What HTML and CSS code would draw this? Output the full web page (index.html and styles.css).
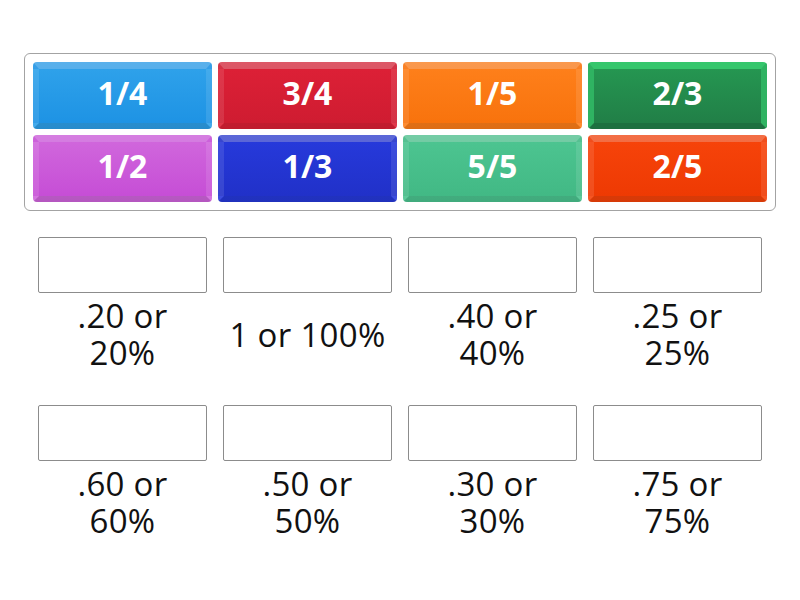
FILE: index.html
```html
<!DOCTYPE html>
<html>
<head>
<meta charset="utf-8">
<link rel="stylesheet" href="styles.css">
</head>
<body>
<div class="page">
  <div class="bank">
    <div class="tile blue">1/4</div>
    <div class="tile red">3/4</div>
    <div class="tile orange">1/5</div>
    <div class="tile green">2/3</div>
    <div class="tile purple">1/2</div>
    <div class="tile navy">1/3</div>
    <div class="tile teal">5/5</div>
    <div class="tile vermilion">2/5</div>
  </div>
  <div class="targets">
    <div class="cell"><div class="slot"></div><div class="label">.20 or<br>20%</div></div>
    <div class="cell"><div class="slot"></div><div class="label">1 or 100%</div></div>
    <div class="cell"><div class="slot"></div><div class="label">.40 or<br>40%</div></div>
    <div class="cell"><div class="slot"></div><div class="label">.25 or<br>25%</div></div>
    <div class="cell"><div class="slot"></div><div class="label">.60 or<br>60%</div></div>
    <div class="cell"><div class="slot"></div><div class="label">.50 or<br>50%</div></div>
    <div class="cell"><div class="slot"></div><div class="label">.30 or<br>30%</div></div>
    <div class="cell"><div class="slot"></div><div class="label">.75 or<br>75%</div></div>
  </div>
</div>
</body>
</html>
```
FILE: styles.css
```css
html, body {
  margin: 0;
  padding: 0;
  background: #ffffff;
}
body {
  font-family: "Open Sans", "Noto Sans", sans-serif;
  width: 800px;
  height: 600px;
  overflow: hidden;
}
.page {
  padding-top: 53px;
  display: flex;
  flex-direction: column;
  align-items: center;
}
.bank {
  width: 734px;
  border: 1px solid #a3a3a3;
  border-radius: 6px;
  padding: 8px;
  display: grid;
  grid-template-columns: repeat(4, 179px);
  grid-auto-rows: 67px;
  gap: 6px;
}
.tile {
  box-sizing: border-box;
  border-radius: 4px;
  border-style: solid;
  border-width: 7px 6px 6px 6px;
  border-top-color: rgba(255, 255, 255, 0.26);
  border-left-color: rgba(255, 255, 255, 0.1);
  border-right-color: rgba(255, 255, 255, 0.1);
  border-bottom-color: rgba(0, 0, 0, 0.12);
  color: #ffffff;
  font-weight: 700;
  font-size: 32px;
  display: flex;
  align-items: center;
  justify-content: center;
  line-height: 1;
  padding-bottom: 6px;
}
.blue { background: linear-gradient(#2ea1ea, #1e93e4); }
.red { background: linear-gradient(#dc2036, #cf1c31); }
.orange { background: linear-gradient(#fe7f1a, #f8730d); }
.green { background: linear-gradient(#259651, #217f47); }
.green { border-top-color: #35c66c; border-left-color: #2fb362; border-right-color: #2fb362; border-bottom-color: #1d7040; }
.purple { background: linear-gradient(#d066dc, #c64ed6); }
.navy { background: linear-gradient(#2639da, #2131c9); }
.teal { background: linear-gradient(#4cc490, #42b985); }
.vermilion { background: linear-gradient(#f6430a, #ee3a03); }
.targets {
  margin-top: 26px;
  display: grid;
  grid-template-columns: repeat(4, 169px);
  column-gap: 16px;
  row-gap: 26px;
}
.cell {
  display: flex;
  flex-direction: column;
}
.slot {
  box-sizing: border-box;
  height: 56px;
  border: 1px solid #8c8c8c;
  border-radius: 2px;
}
.label {
  height: 86px;
  padding-bottom: 4px;
  box-sizing: border-box;
  display: flex;
  align-items: center;
  justify-content: center;
  text-align: center;
  font-size: 33px;
  line-height: 37px;
  letter-spacing: 0.3px;
  color: #111111;
}
```
